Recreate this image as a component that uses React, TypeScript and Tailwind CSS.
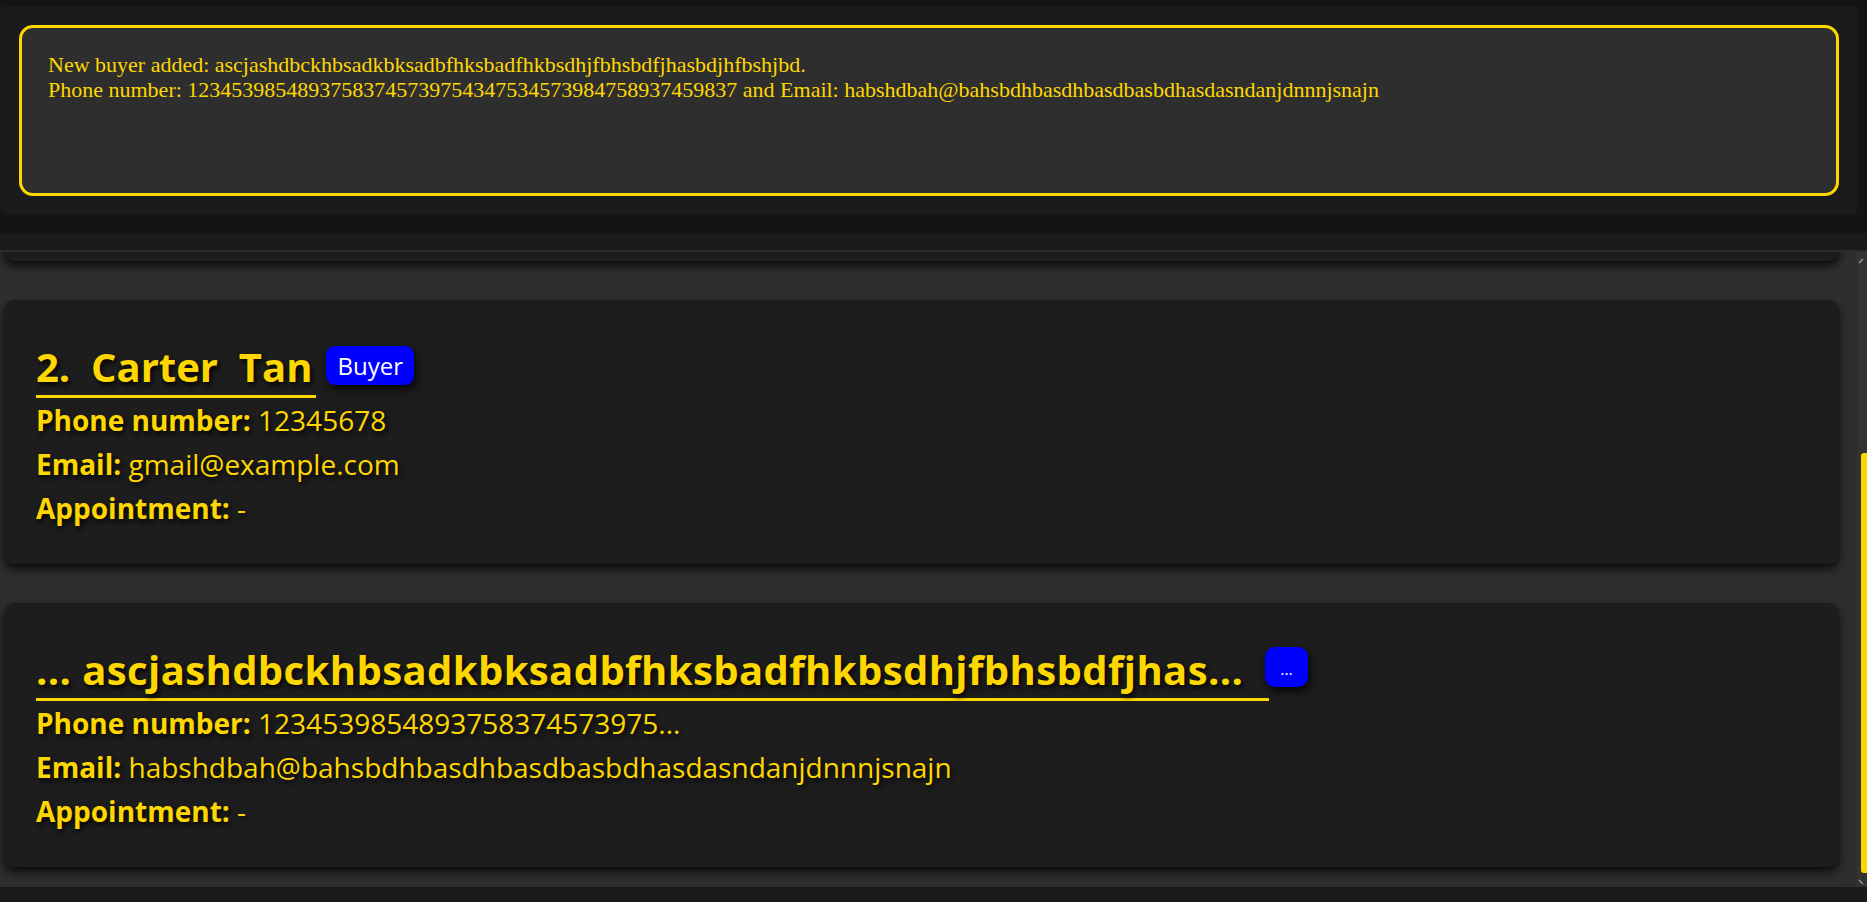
const people = [
  {
    title: "1.  Alex  Yeoh",
    badge: "Seller",
    phone: "87438807",
    email: "alexyeoh@example.com",
    appt: "-",
    titleW: "",
  },
  {
    title: "2.  Carter  Tan",
    badge: "Buyer",
    phone: "12345678",
    email: "gmail@example.com",
    appt: "-",
    titleW: "",
  },
  {
    title: "... ascjashdbckhbsadkbksadbfhksbadfhkbsdhjfbhsbdfjhas...",
    badge: "...",
    phone: "1234539854893758374573975...",
    email: "habshdbah@bahsbdhbasdhbasdbasbdhasdasndanjdnnnjsnajn",
    appt: "-",
    titleW: "w-[1233px] tracking-[0.4px]",
  },
];

const PersonCard = ({ p }: { p: (typeof people)[number] }) => {
  const isDots = p.badge === "...";
  return (
    <div className="h-[264px] shrink-0 rounded-[10px] bg-[#1d1d1d] pl-[32px] pt-[39px] text-[#FFD700] shadow-[0_5px_10px_rgba(0,0,0,0.75)] [text-shadow:2px_3px_5px_rgba(0,0,0,0.9)]">
      <div className="flex items-center">
        <span
          className={`whitespace-pre border-b-[3px] border-[#FFD700] pr-[4px] text-[40px] font-bold leading-[56px] ${p.titleW}`}
        >
          {p.title}
        </span>
        {isDots ? (
          <span className="-ml-[4px] mt-[-10px] flex h-[40px] w-[43px] items-center justify-center rounded-[10px] bg-[#0000ff] pt-[4px] text-[16px] leading-none text-white shadow-[2px_4px_8px_rgba(0,0,0,0.85)] [text-shadow:none]">
            ...
          </span>
        ) : (
          <span className="ml-[10px] mt-[-6px] flex h-[39px] items-center rounded-[9px] bg-[#0000ff] px-[11px] text-[24px] leading-none text-white shadow-[2px_4px_8px_rgba(0,0,0,0.85)] [text-shadow:none]">
            {p.badge}
          </span>
        )}
      </div>
      <div className="text-[28px] leading-[44px]">
        <div>
          <span className="font-bold">Phone number:</span> {p.phone}
        </div>
        <div>
          <span className="font-bold">Email:</span> {p.email}
        </div>
        <div>
          <span className="font-bold">Appointment:</span> {p.appt}
        </div>
      </div>
    </div>
  );
};

export default function App() {
  return (
    <div className="flex h-[902px] w-full flex-col overflow-hidden bg-[#141414] font-['Open_Sans',sans-serif]">
      {/* result display */}
      <div className="mr-[9px] mt-[6px] h-[208px] shrink-0 rounded-[6px] bg-[#1b1b1b] px-[19px] pb-[18px] pt-[19px]">
        <div className="h-full rounded-[14px] border-[3px] border-[#FFD700] bg-[#2e2e2e] pl-[26px] pt-[24px] font-['Liberation_Serif',serif] text-[22px] leading-[25px] text-[#FFD700]">
          <div>New buyer added: ascjashdbckhbsadkbksadbfhksbadfhkbsdhjfbhsbdfjhasbdjhfbshjbd.</div>
          <div>
            Phone number: 12345398548937583745739754347534573984758937459837 and Email:
            habshdbah@bahsbdhbasdhbasdbasbdhasdasndanjdnnnjsnajn
          </div>
        </div>
      </div>

      <div className="mt-[19px] h-[17px] shrink-0 bg-[#1b1b1b]" />

      {/* person list */}
      <div className="flex h-[637px] shrink-0 border-t-2 border-[#2a2a2a] bg-[#2e2e2e]">
        <div className="flex min-w-0 flex-1 flex-col gap-[39px] overflow-hidden pl-[4px] pr-[18px]">
          <div className="-mt-[294px]" />
          {people.map((p) => (
            <PersonCard key={p.title} p={p} />
          ))}
        </div>
        <div className="flex w-[10px] shrink-0 flex-col items-end bg-[#333333]">
          <svg width="10" height="10" viewBox="0 0 10 10" className="mt-[4px]">
            <path d="M2 7 L6 3" stroke="#9a9a9a" strokeWidth="1.5" fill="none" />
          </svg>
          <div className="mt-[187px] h-[421px] w-[6px] rounded-l-[3px] bg-[#FFD700]" />
          <svg width="10" height="10" viewBox="0 0 10 10" className="mt-[4px]">
            <path d="M2 3 L6 7" stroke="#9a9a9a" strokeWidth="1.5" fill="none" />
          </svg>
        </div>
      </div>

      <div className="flex-1 bg-[#1b1b1b]" />
    </div>
  );
}
